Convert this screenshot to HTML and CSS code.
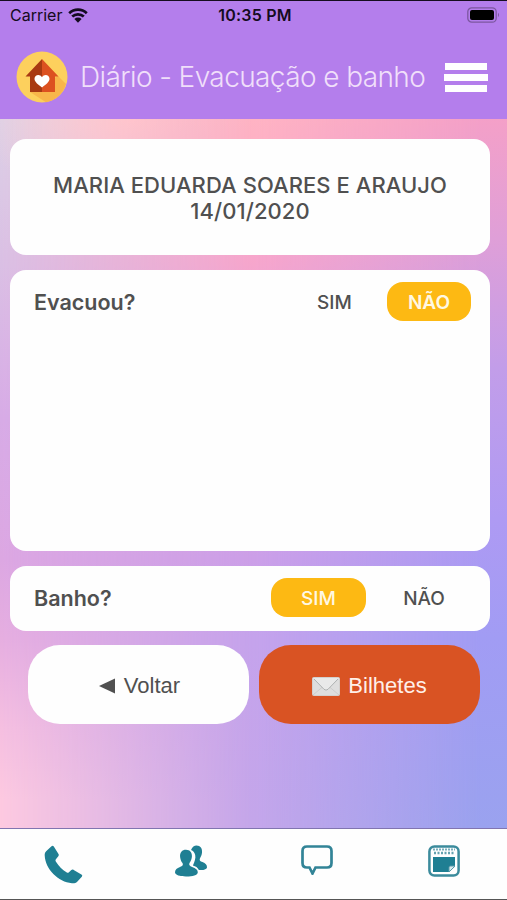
FILE: index.html
```
<!DOCTYPE html>
<html lang="pt-BR">
<head>
    <meta charset="UTF-8">
    <meta name="viewport" content="width=device-width, initial-scale=1.0">
    <title>Diário - Evacuação e banho</title>
    <link rel="stylesheet" href="styles.css">
</head>
<body>
    <header class="header">
        <div class="status-bar">
            <div class="carrier">
                <span>Carrier</span>
                <svg width="20" height="15" viewBox="0 0 20 15">
                    <path d="M1.2 5.2a12.8 12.8 0 0 1 17.6 0M4.2 8.6a8.5 8.5 0 0 1 11.6 0" fill="none" stroke="#140b20" stroke-width="2.7"/>
                    <path d="M6.4 11a5.3 5.3 0 0 1 7.2 0L10 14.7z" fill="#140b20"/>
                </svg>
            </div>
            <span class="time">10:35 PM</span>
            <svg class="battery" width="33" height="16" viewBox="0 0 33 16">
                <rect x=".8" y=".8" width="28.4" height="14.4" rx="4" fill="none" stroke="#7c579f" stroke-width="1.3"/>
                <rect x="3" y="3" width="24" height="10" rx="2" fill="#000"/>
                <path d="M31 5.8q2 2.2 0 4.4z" fill="#7c579f"/>
            </svg>
        </div>
        <div class="title-bar">
            <svg class="logo" width="52" height="52" viewBox="0 0 52 52">
                <circle cx="26" cy="26" r="25.5" fill="#fdd05d"/>
                <path d="M42 25l8 8A25.500 25.500 0 0 1 30 51.200L14 41z" fill="#f8b64a"/>
                <path d="M26 8L9.500 25.500H14V41h12z" fill="#a83a12"/>
                <path d="M26 8l16.500 17.500H39V41H26z" fill="#dc5120"/>
                <path d="M26 36.500c-4-3-7.500-5.500-7.500-8.700 0-4.300 5.500-5.300 7.500-1.600 2-3.700 7.500-2.700 7.500 1.600 0 3.200-3.500 5.700-7.500 8.700z" fill="#fff"/>
            </svg>
            <h1>Diário - Evacuação e banho</h1>
            <div class="menu">
                <span></span>
                <span class="wide"></span>
                <span></span>
            </div>
        </div>
    </header>

    <main class="content">
        <section class="card student">
            <p>MARIA EDUARDA SOARES E ARAUJO</p>
            <p class="date">14/01/2020</p>
        </section>

        <section class="card evacuation">
            <h2>Evacuou?</h2>
            <div class="options">
                <button class="option yes">SIM</button>
                <button class="option no active">NÃO</button>
            </div>
        </section>

        <section class="card bath">
            <h2>Banho?</h2>
            <div class="options">
                <button class="option yes active">SIM</button>
                <button class="option no">NÃO</button>
            </div>
        </section>

        <div class="actions">
            <button class="action back">
                <svg width="17" height="16" viewBox="0 0 17 16"><path d="M0 8L16 .5v15z" fill="#505050"/></svg>
                <span>Voltar</span>
            </button>
            <button class="action notes">
                <svg width="28" height="19" viewBox="0 0 28 19">
                    <rect x=".5" y=".5" width="27" height="18" rx="1" fill="#dedede" stroke="#d3d0ce"/>
                    <path d="M1 18l10-8.500M27 18L17 9.500" fill="none" stroke="#cdcdcd"/>
                    <path d="M1 1l11 11.300q2 1.700 4 0L27 1z" fill="#e9e9e9"/>
                    <path d="M2 2l10 10.300q2 1.700 4 0L26 2" fill="none" stroke="#a8acab" stroke-width=".9"/>
                </svg>
                <span>Bilhetes</span>
            </button>
        </div>
    </main>

    <nav class="tab-bar">
        <a class="tab phone">
            <svg width="40" height="40" viewBox="0 0 40 40" fill="#1f7f93">
                <path d="M7.500 1.200c.9-.9 1.700-.6 2.300.3l4.700 7.500c.5.900.3 1.500-.2 2.200l-2.600 3.200c-.4.700-.3 1.300.1 2 3 4.800 6.300 8.100 11 11.100.7.400 1.300.4 1.900-.1l2.600-2.300c.8-.7 1.500-.8 2.400-.2l7.700 4.700c1 .6 1.100 1.400.4 2.200l-4.600 5c-1.300 1.400-3.200 1.700-5.300 1.500C14.200 37.200 1.300 24.200.7 10.600c-.1-2 .4-3.500 1.700-4.700z"/>
            </svg>
        </a>
        <a class="tab people">
            <svg width="32" height="32" viewBox="0 0 32 32" fill="#1f7f93">
                <path d="M16 5C17.300 1.700 19.300.5 21.500.5c3.900 0 6 3 5.500 7.200-.3 2.700-1.300 4.200-2.100 5.700-.7 1.800.2 2.700 2.600 3.700 3.100 1.200 4.500 2.800 4.500 5.200-.2 2.300-4.600 3.300-8.100 2.600-1.100-2.400-3.300-3.800-6-4.500 1.700-3.500 3-6.900 2.300-10.300C19.800 7.600 18.300 6 16 5z"/>
                <path d="M11 4.800c4 0 6.300 2.800 5.900 7-.2 2.600-1.300 4.800-2.400 6.300-.9 1.800.2 3.100 2.600 3.900 3.700 1.200 5.700 2.800 5.700 5.200 0 3.100-5.800 4.400-11.800 4.300C5 31.400 0 30.200 0 27.300c0-2.600 2-4.100 5-5.200 2.300-.8 3.600-2.100 2.500-4-1.200-1.700-2.100-3.600-2.400-6.200-.4-4.400 1.900-7.100 5.900-7.100z"/>
            </svg>
        </a>
        <a class="tab message">
            <svg width="32" height="30" viewBox="0 0 32 30">
                <path d="M6 1.500h20q4.500 0 4.500 4.500v12q0 4.500-4.500 4.500H14.500L11.500 28.500 8.500 22.500H6q-4.500 0-4.500-4.500V6Q1.500 1.500 6 1.500z" fill="none" stroke="#328497" stroke-width="2.700"/>
            </svg>
        </a>
        <a class="tab calendar">
            <svg width="32" height="32" viewBox="0 0 32 32">
                <rect x="1.400" y="1.400" width="29.200" height="29.200" rx="5" fill="#fff" stroke="#3b8b9c" stroke-width="2.500"/>
                <path d="M5 4.500h22" stroke="#79aebb" stroke-width="2" stroke-dasharray="2 1"/>
                <path d="M6 8h21" stroke="#64a2b0" stroke-width="2.500" stroke-dasharray="2 1.500"/>
                <path d="M5 12h22v9.500l-6 5.500H5z" fill="#1f7f93"/>
                <path d="M21 27v-4.500q0-1.500 1.500-1.500H27z" fill="#d8ebee" stroke="#5799a8"/>
            </svg>
        </a>
    </nav>
</body>
</html>
```

FILE: styles.css
```
* {
    box-sizing: border-box;
}

body {
    font-family: 'Inter', sans-serif;
    margin: 0;
    height: 100vh;
    display: flex;
    flex-direction: column;
    overflow: hidden;
    color: #505050;
}

h1, h2, p {
    margin: 0;
}

button {
    border: none;
    padding: 0;
    font-family: inherit;
    color: inherit;
    background: transparent;
}

svg {
    display: block;
    flex: none;
}

/* Header */
.header {
    height: 119px;
    background: #b47eec;
    border-top: 1px solid #160d20;
}

.status-bar {
    height: 28px;
    display: grid;
    grid-template-columns: 1fr auto 1fr;
    align-items: center;
    padding: 0 7px 0 10px;
    color: #140b20;
    font-size: 16px;
}

.carrier {
    display: flex;
    align-items: center;
    gap: 6px;
}

.time {
    font-weight: 600;
    letter-spacing: 0.2px;
}

.battery {
    justify-self: end;
}

.title-bar {
    height: 96px;
    display: flex;
    align-items: center;
    padding: 0 19px 0 16px;
}

h1 {
    flex: 1;
    margin-left: 12px;
    font-size: 28px;
    font-weight: 350;
    letter-spacing: -0.6px;
    white-space: nowrap;
    color: #f0dffa;
}

.menu {
    width: 44px;
    display: flex;
    flex-direction: column;
    align-items: center;
    gap: 4px;
}

.menu span {
    width: 42px;
    height: 7px;
    background: #fff;
}

.menu .wide {
    width: 44px;
}

/* Content */
.content {
    flex: 1;
    display: flex;
    flex-direction: column;
    gap: 15px;
    padding: 20px 17px 0 10px;
    position: relative;
    isolation: isolate;
    background: linear-gradient(#f4a0c8 0, #df9fd8 120px, #c29de9 250px, #ae9af3 400px, #a19cf4 520px, #9aa2ef 100%);
}

/* soft colour blend behind the cards: middle and left columns */
.content::before,
.content::after {
    content: '';
    position: absolute;
    inset: 0;
    z-index: -1;
}

.content::before {
    background: linear-gradient(#ffb3c3 0, #f7a6cc 140px, #dba3e0 290px, #cc9fe8 440px, #c5a3ec 520px, #c4a6ea 100%);
    mask-image: linear-gradient(to right, #000 50%, transparent 95%);
}

.content::after {
    background:
        radial-gradient(ellipse 150px 90px at 130px 0, #ffd6d6 0%, rgba(255, 214, 214, 0) 100%),
        linear-gradient(#dcd0e6 0, #dac0e4 140px, #d7abe6 300px, #dca7e2 440px, #e6aee0 520px, #f5bfe0 610px, #fdc9e0 680px);
    mask-image: linear-gradient(to right, #000 0, transparent 50%);
}

.card {
    background: #fefefe;
    border-radius: 16px;
}

.student {
    height: 116px;
    padding-top: 33px;
    text-align: center;
    font-size: 22px;
    font-weight: 500;
    line-height: 26px;
    letter-spacing: 0.06px;
    white-space: nowrap;
}

.evacuation,
.bath {
    display: flex;
    justify-content: space-between;
    align-items: flex-start;
    padding: 12px 19px 0 24px;
}

.evacuation {
    height: 281px;
}

.bath {
    height: 64.500px;
}

h2 {
    font-size: 21.5px;
    font-weight: 600;
    line-height: 40px;
}

.options {
    display: flex;
}

.option {
    height: 39px;
    padding-top: 1px;
    border-radius: 16px;
    font-size: 19px;
    font-weight: 500;
}

.yes {
    width: 95px;
}

.no {
    width: 84px;
}

.evacuation .options {
    gap: 5px;
}

.bath .options {
    gap: 16px;
    margin-right: 5px;
}

.active {
    background: #fdb913;
    color: #fff8e4;
}

.option.no.active {
    font-weight: 600;
}

/* Buttons */
.actions {
    display: flex;
    gap: 10px;
    margin-top: -0.5px;
    margin-left: 18px;
}

.action {
    width: 221px;
    height: 79px;
    border-radius: 32px;
    display: flex;
    justify-content: center;
    align-items: center;
    gap: 8px;
    font-family: 'Liberation Sans', Arial, sans-serif;
    font-size: 22px;
    padding-top: 3px;
}

.back {
    background: #fefefe;
    padding-left: 2px;
}

.notes {
    background: #d95323;
    color: #fff0e9;
}

/* Bottom tabs */
.tab-bar {
    height: 72px;
    display: grid;
    grid-template-columns: repeat(4, 1fr);
    background: #fefefe;
    border-top: 1px solid #8175b0;
    border-bottom: 1px solid #555;
}

.tab {
    display: flex;
    justify-content: center;
    padding-top: 16px;
}

.phone,
.people {
    padding-left: 2px;
}
```
